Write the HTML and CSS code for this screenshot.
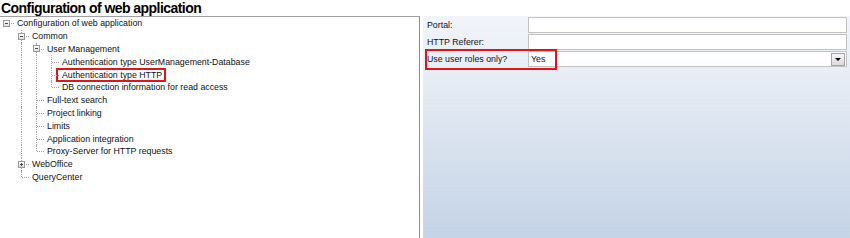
FILE: index.html
```html
<!DOCTYPE html>
<html lang="en">
<head>
    <meta charset="UTF-8">
    <title>Configuration of web application</title>
    <link rel="stylesheet" href="styles.css">
</head>
<body>
    <div class="title">Configuration of web application</div>
    <div class="main">
        <div class="tree">
            <div class="row"><span class="g root"><i class="tog"></i></span><span class="txt">Configuration of web application</span></div>
            <div class="row"><span class="g"></span><span class="g tee"><i class="tog"></i></span><span class="txt">Common</span></div>
            <div class="row"><span class="g"></span><span class="g pipe"></span><span class="g tee"><i class="tog"></i></span><span class="txt">User Management</span></div>
            <div class="row"><span class="g"></span><span class="g pipe"></span><span class="g pipe"></span><span class="g tee"></span><span class="txt">Authentication type UserManagement-Database</span></div>
            <div class="row"><span class="g"></span><span class="g pipe"></span><span class="g pipe"></span><span class="g tee"></span><span class="txt hl">Authentication type HTTP</span></div>
            <div class="row"><span class="g"></span><span class="g pipe"></span><span class="g pipe"></span><span class="g elbow"></span><span class="txt">DB connection information for read access</span></div>
            <div class="row"><span class="g"></span><span class="g pipe"></span><span class="g tee"></span><span class="txt">Full-text search</span></div>
            <div class="row"><span class="g"></span><span class="g pipe"></span><span class="g tee"></span><span class="txt">Project linking</span></div>
            <div class="row"><span class="g"></span><span class="g pipe"></span><span class="g tee"></span><span class="txt">Limits</span></div>
            <div class="row"><span class="g"></span><span class="g pipe"></span><span class="g tee"></span><span class="txt">Application integration</span></div>
            <div class="row"><span class="g"></span><span class="g pipe"></span><span class="g elbow"></span><span class="txt">Proxy-Server for HTTP requests</span></div>
            <div class="row"><span class="g"></span><span class="g tee"><i class="tog plus"></i></span><span class="txt">WebOffice</span></div>
            <div class="row"><span class="g"></span><span class="g elbow"></span><span class="txt">QueryCenter</span></div>
        </div>
        <div class="props">
            <div class="grid">
                <div class="lbl">Portal:</div>
                <div class="field"></div>
                <div class="lbl">HTTP Referer:</div>
                <div class="field"></div>
                <div class="lbl">Use user roles only?</div>
                <div class="field combo"><span>Yes</span><span class="drop"></span></div>
            </div>
            <div class="mark"></div>
        </div>
    </div>
</body>
</html>
```
FILE: styles.css
```css
body {
    margin: 0;
    background: #fff;
    font-family: 'Liberation Sans', Arial, sans-serif;
    color: #111;
    overflow: hidden;
}
.title {
    height: 16px;
    font-size: 14px;
    font-weight: bold;
    line-height: 16px;
    letter-spacing: -0.55px;
    padding-left: 1px;
    color: #000;
}
.main {
    display: flex;
    height: 222px;
}

/* tree */
.tree {
    width: 419px;
    border-top: 1px solid #a0a0a0;
    border-right: 1px solid #8c8c8c;
    font-size: 8.8px;
}
.row {
    display: flex;
    align-items: center;
    height: 12.8px;
    white-space: nowrap;
}
.g {
    position: relative;
    flex: none;
    width: 15px;
    height: 100%;
}
.g::before,
.g::after {
    content: "";
    position: absolute;
}
.pipe::before,
.tee::before {
    left: 6px;
    top: 0;
    bottom: 0;
    border-left: 1px dotted #a5a5a5;
}
.elbow::before {
    left: 6px;
    top: 0;
    height: 50%;
    border-left: 1px dotted #a5a5a5;
}
.tee::after,
.elbow::after,
.root::after {
    left: 7px;
    right: 1px;
    top: 50%;
    border-top: 1px dotted #a5a5a5;
}
.txt {
    padding-left: 2px;
}
.hl {
    display: inline-block;
    box-sizing: border-box;
    height: 14px;
    line-height: 10px;
    margin-left: -4px;
    padding: 0 2px 0 4px;
    border: 2px solid #e3121b;
}
.tog {
    position: absolute;
    z-index: 1;
    left: 3px;
    top: calc(50% - 3.5px);
    box-sizing: border-box;
    width: 7px;
    height: 7px;
    border: 1px solid #9a9a9a;
    background: linear-gradient(#ffffff, #dcdcdc);
}
.tog::before {
    content: "";
    position: absolute;
    left: 1px;
    top: 2px;
    width: 3px;
    height: 1px;
    background: #4a4a4a;
}
.tog.plus::after {
    content: "";
    position: absolute;
    left: 2px;
    top: 1px;
    width: 1px;
    height: 3px;
    background: #4a4a4a;
}

/* property grid */
.props {
    position: relative;
    flex: 1;
    margin-left: 3px;
    background: linear-gradient(#f1f4f9, #eaeff6 20%, #c4d3e6);
}
.grid {
    display: grid;
    grid-template-columns: 105px 1fr;
    grid-auto-rows: 16px;
    row-gap: 1px;
    padding: 1px 3px 0 0;
    font-size: 8.8px;
}
.lbl {
    padding-left: 4px;
    line-height: 16px;
    white-space: nowrap;
}
.field {
    background: #fff;
    border: 1px solid #c2c2c2;
}
.combo {
    display: flex;
    align-items: center;
    padding-left: 2px;
}
.drop {
    position: relative;
    margin-left: auto;
    margin-right: 1px;
    box-sizing: border-box;
    width: 14px;
    height: 13px;
    border: 1px solid #a4a4a4;
    background: linear-gradient(#f6f6f6, #dadada);
}
.drop::after {
    content: "";
    position: absolute;
    left: 3px;
    top: 4px;
    border-left: 3px solid transparent;
    border-right: 3px solid transparent;
    border-top: 3px solid #000;
}
.mark {
    position: absolute;
    left: 2px;
    top: 33px;
    box-sizing: border-box;
    width: 132px;
    height: 21px;
    border: 2px solid #e3121b;
}
```
